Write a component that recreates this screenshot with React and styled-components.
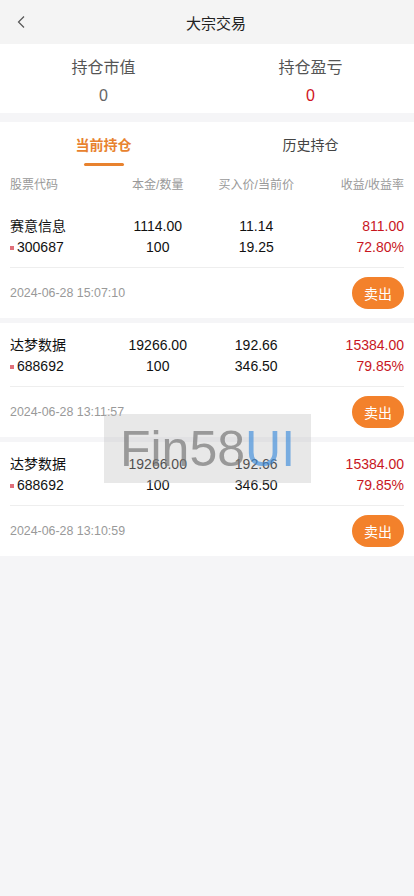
import React, { useState } from "react";
import styled, { createGlobalStyle } from "styled-components";

const GlobalStyle = createGlobalStyle`
  html, body {
    margin: 0;
    padding: 0;
    background: #f5f5f7;
    font-family: "Liberation Sans", "Noto Sans CJK SC", sans-serif;
  }
  * { box-sizing: border-box; }
`

const PageSt = styled.div`
  position: relative;
  width: 414px;
  min-height: 896px;
  background: #f5f5f7;
`

const HeaderSt = styled.div`
  position: relative;
  height: 44px;
  display: flex;
  align-items: center;
  justify-content: center;
  padding-left: 18px;
  background: #f4f4f4;
`

const BackSt = styled.div`
  position: absolute;
  left: 14px;
  top: 14px;
  width: 16px;
  height: 16px;
  display: flex;
`

const TitleSt = styled.h1`
  margin: 0;
  font-size: 15px;
  font-weight: normal;
  color: #222;
`

const SummarySt = styled.div`
  display: grid;
  grid-template-columns: 1fr 1fr;
  background: #fff;
  padding: 12px 0 5px;
  margin-bottom: 9px;
`

const StatSt = styled.div`
  display: flex;
  flex-direction: column;
  align-items: center;
  gap: 4px;
`

const StatLabelSt = styled.span`
  font-size: 16px;
  line-height: 24px;
  color: #555;
`

const StatValueSt = styled.span`
  font-size: 16px;
  line-height: 24px;
  color: ${({ $red }) => ($red ? "#d0161e" : "#666")};
`

const TabsSt = styled.div`
  display: grid;
  grid-template-columns: 1fr 1fr;
  background: #fff;
  height: 48px;
`

const TabSt = styled.div`
  display: flex;
  flex-direction: column;
  align-items: center;
  padding-top: 13px;
  font-size: 14px;
  line-height: 20px;
  color: ${({ $active }) => ($active ? "#e8822e" : "#444")};
  font-weight: ${({ $active }) => ($active ? "bold" : "normal")};
  cursor: pointer;

  &::after {
    content: "";
    display: ${({ $active }) => ($active ? "block" : "none")};
    width: 40px;
    height: 3px;
    margin-top: 8px;
    border-radius: 2px;
    background: #e8822e;
  }
`

const Grid4St = styled.div`
  display: grid;
  grid-template-columns: repeat(4, 1fr);
  align-items: center;

  & > *:nth-child(4n + 1) { text-align: left; }
  & > *:nth-child(4n + 2),
  & > *:nth-child(4n + 3) { text-align: center; }
  & > *:nth-child(4n) { text-align: right; }
`

const ColHeadSt = styled(Grid4St)`
  background: #fff;
  padding: 5px 10px 9px;
  font-size: 12px;
  line-height: 20px;
  color: #999;
`

const ListSt = styled.div`
  display: flex;
  flex-direction: column;
  gap: 5px;
`

const CardSt = styled.div`
  background: #fff;
  padding: 0 10px;
`

const CardBodySt = styled(Grid4St)`
  padding: 12px 0 9px;
  border-bottom: 1px solid #eee;
  font-size: 14px;
  line-height: 21px;
  color: #111;
`

const RedSt = styled.span`
  color: #c8161e;
`

const CodeSt = styled.span`
  display: flex;
  align-items: center;
  gap: 3px;

  &::before {
    content: "";
    width: 4px;
    height: 4px;
    background: #e0707a;
  }
`

const CardFootSt = styled.div`
  display: flex;
  align-items: center;
  justify-content: space-between;
  padding: 9px 0;
`

const TimeSt = styled.span`
  font-size: 12.4px;
  color: #999;
`

const SellBtnSt = styled.button`
  width: 52px;
  height: 32px;
  border: none;
  border-radius: 16px;
  background: #f3812b;
  color: #fff;
  font-family: inherit;
  font-size: 14px;
  padding: 0;
  cursor: pointer;
`

const WatermarkSt = styled.div`
  position: absolute;
  left: 104px;
  top: 414px;
  width: 207px;
  height: 69px;
  display: flex;
  align-items: center;
  justify-content: center;
  background: rgba(190, 190, 190, 0.35);
  font-size: 50px;
  pointer-events: none;
`

const MarkGraySt = styled.span`
  color: rgba(120, 120, 120, 0.7);
`

const MarkBlueSt = styled.span`
  color: rgba(60, 140, 220, 0.65);
`

const positions = [
  { name: "赛意信息", code: "300687", cost: "1114.00", qty: "100", buy: "11.14", now: "19.25", profit: "811.00", rate: "72.80%", time: "2024-06-28 15:07:10" },
  { name: "达梦数据", code: "688692", cost: "19266.00", qty: "100", buy: "192.66", now: "346.50", profit: "15384.00", rate: "79.85%", time: "2024-06-28 13:11:57" },
  { name: "达梦数据", code: "688692", cost: "19266.00", qty: "100", buy: "192.66", now: "346.50", profit: "15384.00", rate: "79.85%", time: "2024-06-28 13:10:59" },
];

export default function App() {
  const [tab, setTab] = useState(0);

  return (
    <PageSt>
      <GlobalStyle />
      <HeaderSt>
        <BackSt>
          <svg width="16" height="16" viewBox="0 0 16 16">
            <polyline points="10,2.5 4.5,8 10,13.5" fill="none" stroke="#555" strokeWidth="1.2" />
          </svg>
        </BackSt>
        <TitleSt>大宗交易</TitleSt>
      </HeaderSt>

      <SummarySt>
        <StatSt>
          <StatLabelSt>持仓市值</StatLabelSt>
          <StatValueSt>0</StatValueSt>
        </StatSt>
        <StatSt>
          <StatLabelSt>持仓盈亏</StatLabelSt>
          <StatValueSt $red>0</StatValueSt>
        </StatSt>
      </SummarySt>

      <TabsSt>
        <TabSt $active={tab === 0} onClick={() => setTab(0)}>当前持仓</TabSt>
        <TabSt $active={tab === 1} onClick={() => setTab(1)}>历史持仓</TabSt>
      </TabsSt>

      <ColHeadSt>
        <span>股票代码</span>
        <span>本金/数量</span>
        <span>买入价/当前价</span>
        <span>收益/收益率</span>
      </ColHeadSt>

      <ListSt>
        {positions.map((p, idx) => (
          <CardSt key={idx}>
            <CardBodySt>
              <span>{p.name}</span>
              <span>{p.cost}</span>
              <span>{p.buy}</span>
              <RedSt>{p.profit}</RedSt>
              <CodeSt>{p.code}</CodeSt>
              <span>{p.qty}</span>
              <span>{p.now}</span>
              <RedSt>{p.rate}</RedSt>
            </CardBodySt>
            <CardFootSt>
              <TimeSt>{p.time}</TimeSt>
              <SellBtnSt>卖出</SellBtnSt>
            </CardFootSt>
          </CardSt>
        ))}
      </ListSt>

      <WatermarkSt>
        <MarkGraySt>Fin58</MarkGraySt>
        <MarkBlueSt>UI</MarkBlueSt>
      </WatermarkSt>
    </PageSt>
  );
}
